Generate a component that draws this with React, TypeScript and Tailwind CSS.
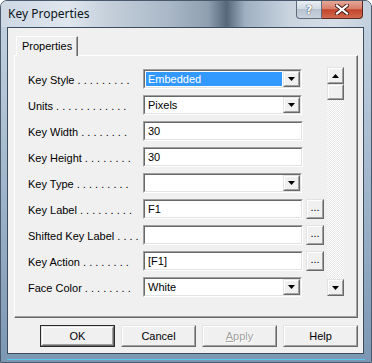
import React from "react";

function Sunken({ children, className = "" }: { children?: React.ReactNode; className?: string }) {
  return (
    <div className={"border border-t-[#a0a0a0] border-l-[#a0a0a0] border-b-white border-r-white " + className}>
      <div className="h-full w-full border border-t-[#696969] border-l-[#696969] border-b-[#e3e3e3] border-r-[#e3e3e3] bg-white">
        {children}
      </div>
    </div>
  );
}

function Raised({ children, className = "" }: { children?: React.ReactNode; className?: string }) {
  return (
    <div className={"border border-t-[#e3e3e3] border-l-[#e3e3e3] border-b-[#696969] border-r-[#696969] bg-[#f0f0f0] " + className}>
      <div className="flex h-full w-full items-center justify-center border border-t-white border-l-white border-b-[#a0a0a0] border-r-[#a0a0a0]">
        {children}
      </div>
    </div>
  );
}

function DownArrow() {
  return (
    <svg width="7" height="4" viewBox="0 0 7 4">
      <path d="M0 0h7L3.5 4z" fill="#000" />
    </svg>
  );
}

function UpArrow() {
  return (
    <svg width="7" height="4" viewBox="0 0 7 4">
      <path d="M0 4h7L3.5 0z" fill="#000" />
    </svg>
  );
}

function Combo({ value, selected = false }: { value: string; selected?: boolean }) {
  return (
    <Sunken className="h-[20px] w-[159px]">
      <div className="flex h-full items-stretch">
        <div className="flex flex-1 items-center pl-[1px] pr-[1px] py-[1px]">
          <div
            className={
              "flex h-full w-full items-center pl-[2px] " + (selected ? "bg-[#3399ff] text-white" : "text-black")
            }
          >
            {value}
          </div>
        </div>
        <Raised className="h-[16px] w-[17px]">
          <DownArrow />
        </Raised>
      </div>
    </Sunken>
  );
}

function TextBox({ value }: { value: string }) {
  return (
    <Sunken className="h-[20px] w-[160px]">
      <div className="flex h-full items-center pl-[3px]">{value}</div>
    </Sunken>
  );
}

function Row({ label, children }: { label: string; children: React.ReactNode }) {
  return (
    <div className="flex h-[20px] items-center">
      <div className="w-[115px] whitespace-nowrap pt-[3px]">{label}</div>
      {children}
    </div>
  );
}

function Ellipsis() {
  return (
    <Raised className="ml-[3px] h-[20px] w-[18px]">
      <span className="pb-[3px] text-[11px] leading-none">...</span>
    </Raised>
  );
}

function DlgButton({ label, isDefault = false, disabled = false }: { label: React.ReactNode; isDefault?: boolean; disabled?: boolean }) {
  const inner = (
    <Raised className={isDefault ? "h-full w-full" : "h-[22px] w-[75px]"}>
      <span className={disabled ? "text-[#a0a0a0] [text-shadow:1px_1px_0_#ffffff]" : "text-black"}>{label}</span>
    </Raised>
  );
  if (isDefault) {
    return <div className="h-[22px] w-[75px] border border-[#2a2a2a]">{inner}</div>;
  }
  return inner;
}

export default function App() {
  return (
    <div className="relative h-[363px] w-[372px] overflow-hidden rounded-t-[7px] border border-[#4a5a6c] bg-[linear-gradient(180deg,#c6d4e2_0%,#a9bdd1_40%,#8aa3bd_80%,#7c97b3_100%)] font-['Liberation_Sans',Arial,sans-serif] text-[11px] text-black">
      {/* title bar */}
      <div className="flex h-[26px] items-start bg-[linear-gradient(90deg,#cdd8e3_0%,#dfe6ee_18%,#c3ced9_30%,#aab8c7_45%,#8f9fb1_56%,#56677a_61%,#9fb0c2_66%,#c9d4df_78%,#d6dfe8_90%,#c2cfdc_100%)]">
        <div className="pl-[7px] pt-[6px] font-['Noto_Sans',sans-serif] text-[12px] leading-[14px] text-[#0b1620]">Key Properties</div>
        <div className="ml-auto mr-[8px] flex">
          <div className="flex h-[18px] w-[26px] items-center justify-center rounded-bl-[4px] border border-t-0 border-[#5d6b7b] bg-[linear-gradient(180deg,#e9eef3_0%,#d3dbe4_45%,#b7c3d0_50%,#c9d3de_100%)]">
            <span className="font-['DejaVu_Sans',sans-serif] text-[12px] font-bold leading-none text-white [text-shadow:0_0_1px_#2c3a4a,0_0_1px_#2c3a4a]">?</span>
          </div>
          <div className="flex h-[18px] w-[41px] items-center justify-center rounded-br-[4px] border border-l-0 border-t-0 border-[#5a2a22] bg-[linear-gradient(180deg,#e6a897_0%,#d67f6b_45%,#c4442c_52%,#cf6a4e_100%)]">
            <svg width="14" height="11" viewBox="0 0 14 11">
              <path d="M2 1.5L12 9.5M12 1.5L2 9.5" stroke="#3b1a14" strokeWidth="4" strokeLinecap="square" />
              <path d="M2 1.5L12 9.5M12 1.5L2 9.5" stroke="#ffffff" strokeWidth="2.2" strokeLinecap="square" />
            </svg>
          </div>
        </div>
      </div>

      {/* client area */}
      <div className="ml-[6px] h-[327px] w-[357px] border border-[#3d4d5e] bg-[#f0f0f0]">
        {/* tab header */}
        <div className="ml-[8px] mt-[8px] flex">
          <div className="relative z-10 -mb-[1px] flex h-[20px] w-[62px] border border-b-0 border-l-white border-t-white border-r-[#696969] bg-[#f0f0f0]">
            <div className="flex h-full w-full items-center border-r border-r-[#a0a0a0] pl-[5px] pb-[1px]">Properties</div>
          </div>
        </div>
        {/* tab panel */}
        <div className="ml-[6px] h-[263px] w-[344px] border border-l-white border-t-white border-b-[#696969] border-r-[#696969]">
          <div className="flex h-full w-full border-b border-r border-b-[#a0a0a0] border-r-[#a0a0a0] pl-[13px] pt-[11px]">
            <div className="mt-[2px] flex flex-col gap-[6px]">
              <Row label="Key Style . . . . . . . . .">
                <Combo value="Embedded" selected />
              </Row>
              <Row label="Units . . . . . . . . . . . .">
                <Combo value="Pixels" />
              </Row>
              <Row label="Key Width . . . . . . . .">
                <TextBox value="30" />
              </Row>
              <Row label="Key Height . . . . . . . .">
                <TextBox value="30" />
              </Row>
              <Row label="Key Type . . . . . . . . .">
                <Combo value="" />
              </Row>
              <Row label="Key Label . . . . . . . . .">
                <TextBox value="F1" />
                <Ellipsis />
              </Row>
              <Row label="Shifted Key Label . . . .">
                <TextBox value="" />
                <Ellipsis />
              </Row>
              <Row label="Key Action . . . . . . . .">
                <TextBox value="[F1]" />
                <Ellipsis />
              </Row>
              <Row label="Face Color . . . . . . . .">
                <Combo value="White" />
              </Row>
            </div>
            {/* scrollbar */}
            <div className="ml-[3px] flex h-[229px] w-[17px] flex-col">
              <Raised className="h-[17px] w-[17px]">
                <UpArrow />
              </Raised>
              <Raised className="h-[16px] w-[17px]" />
              <div className="flex-1 bg-[repeating-conic-gradient(#ffffff_0_25%,#e6e6e6_0_50%)] bg-[length:2px_2px]" />
              <Raised className="h-[17px] w-[17px]">
                <DownArrow />
              </Raised>
            </div>
          </div>
        </div>
        {/* buttons */}
        <div className="mt-[7px] flex justify-end gap-[6px] pr-[5px]">
          <DlgButton label="OK" isDefault />
          <DlgButton label="Cancel" />
          <DlgButton
            label={
              <span>
                <span className="underline">A</span>pply
              </span>
            }
            disabled
          />
          <DlgButton label="Help" />
        </div>
      </div>
      {/* bottom frame highlight */}
      <div className="absolute bottom-[2px] left-[6px] right-[6px] h-[1px] bg-[#59c8ec]" />
    </div>
  );
}
